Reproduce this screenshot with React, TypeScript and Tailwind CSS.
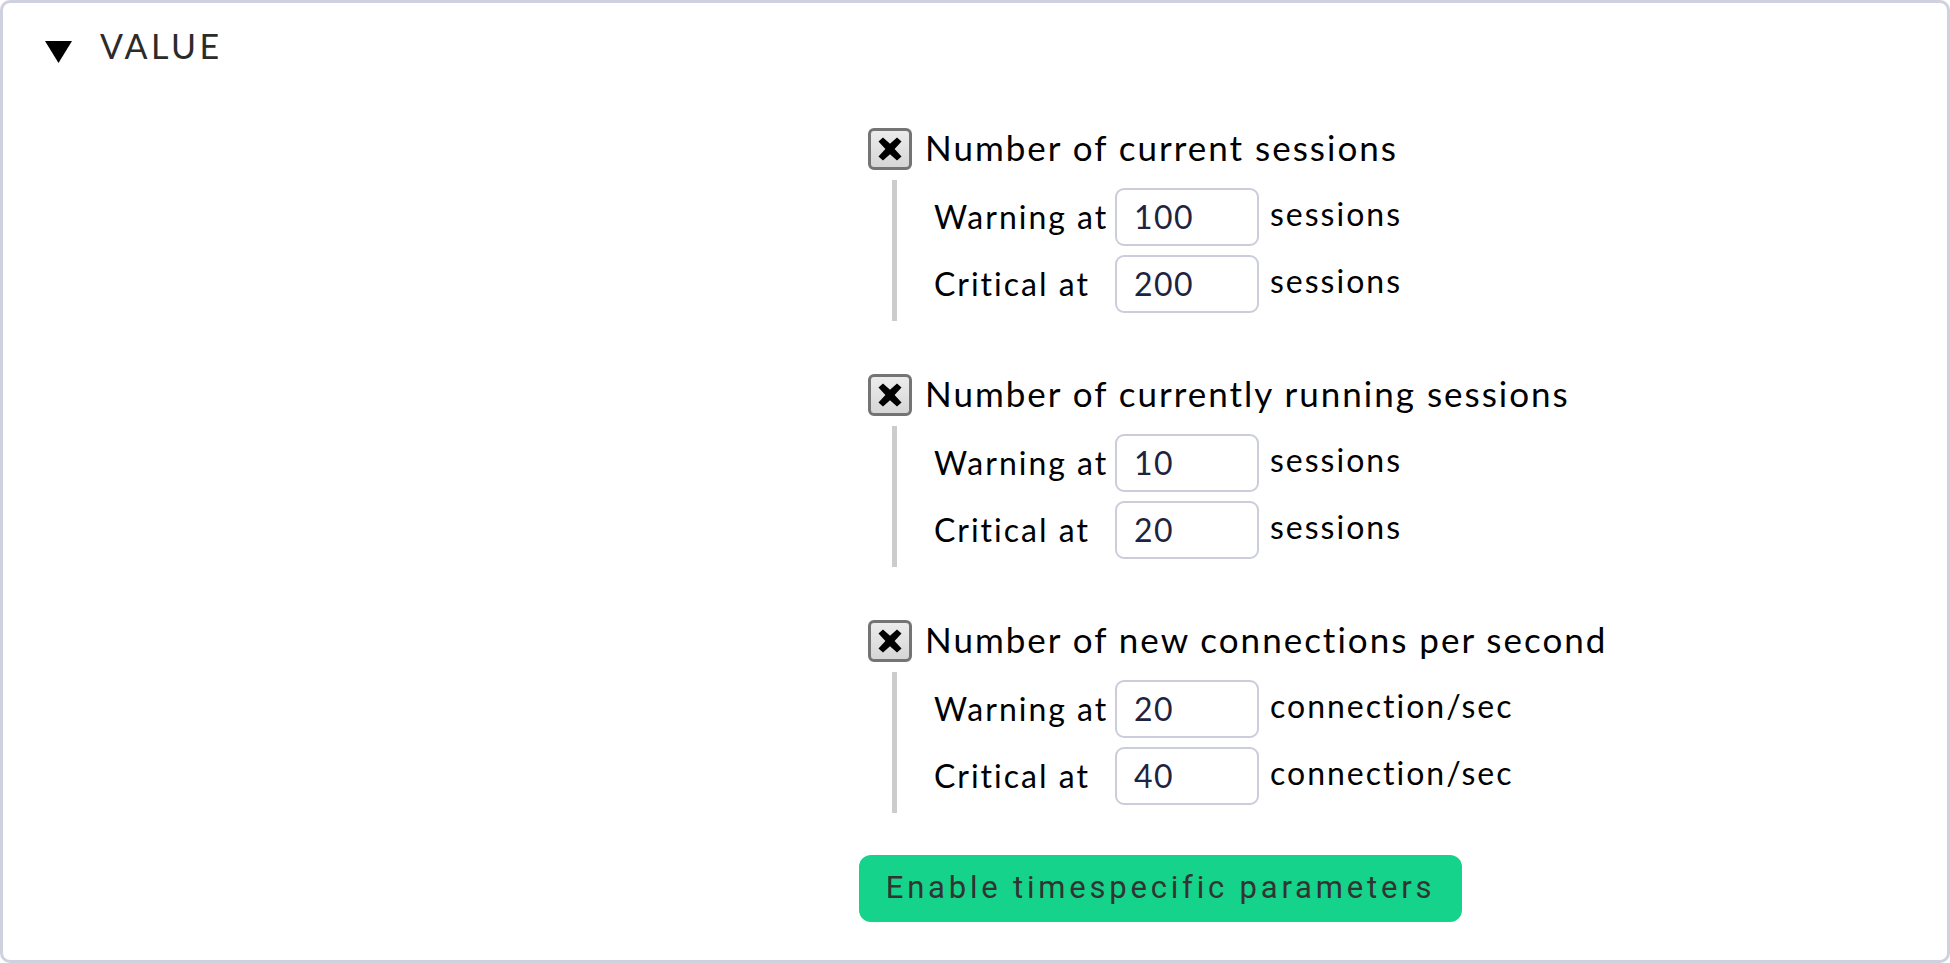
import React from "react";

type Threshold = { label: string; value: string; unit: string };
type Section = { title: string; rows: Threshold[] };

const SECTIONS: Section[] = [
  {
    title: "Number of current sessions",
    rows: [
      { label: "Warning at", value: "100", unit: "sessions" },
      { label: "Critical at", value: "200", unit: "sessions" },
    ],
  },
  {
    title: "Number of currently running sessions",
    rows: [
      { label: "Warning at", value: "10", unit: "sessions" },
      { label: "Critical at", value: "20", unit: "sessions" },
    ],
  },
  {
    title: "Number of new connections per second",
    rows: [
      { label: "Warning at", value: "20", unit: "connection/sec" },
      { label: "Critical at", value: "40", unit: "connection/sec" },
    ],
  },
];

function CheckedBox() {
  return (
    <span className="flex h-[42px] w-[44px] shrink-0 items-center justify-center rounded-[6px] border-[3px] border-[#747474] bg-gradient-to-b from-[#ececec] to-[#d6d6d6]">
      <svg width="26" height="24" viewBox="0 0 26 24" aria-hidden="true">
        <path
          d="M1.5 4.5 L6 0.5 L13 6.8 L20 0.5 L24.5 4.5 L17.6 12 L24.5 19.5 L20 23.5 L13 17.2 L6 23.5 L1.5 19.5 L8.4 12 Z"
          fill="#000"
        />
      </svg>
    </span>
  );
}

function ThresholdRow({ row }: { row: Threshold }) {
  return (
    <div className="flex h-[58px] items-center">
      <span className="w-[181px] shrink-0 text-[32px] tracking-[2px] text-black">{row.label}</span>
      <span className="flex h-[58px] w-[144px] shrink-0 items-center rounded-[9px] border-2 border-[#cbcdda] bg-white pl-[17px] text-[32px] tracking-[1.5px] text-[#1e2440]">
        {row.value}
      </span>
      <span className="ml-[11px] -mt-[6px] text-[32px] tracking-[2px] text-black">{row.unit}</span>
    </div>
  );
}

function SectionBlock({ section, first }: { section: Section; first: boolean }) {
  return (
    <div className={first ? "" : "mt-[53px]"}>
      <div className="flex h-[42px] items-center gap-[13px]">
        <CheckedBox />
        <span className="pb-[3px] text-[35px] tracking-[2px] text-black">{section.title}</span>
      </div>
      <div className="mt-[10px] ml-[24px] flex flex-col gap-[9px] border-l-[5px] border-[#cccccc] py-[8px] pl-[37px]">
        {section.rows.map((r) => (
          <ThresholdRow key={r.label} row={r} />
        ))}
      </div>
    </div>
  );
}

export default function App() {
  return (
    <div className="h-[963px] w-full bg-white font-['Lato','Noto_Sans',sans-serif]">
      <div className="h-full rounded-[10px] border-[3px] border-[#cfd1de] bg-white">
        <div className="mt-[23px] flex h-[40px] items-center pl-[42px]">
          <svg width="27" height="22" viewBox="0 0 27 22" className="mt-[12px]" aria-hidden="true">
            <polygon points="0,0 27,0 13.5,22" fill="#000" />
          </svg>
          <span className="ml-[28px] text-[34px] leading-[40px] tracking-[0.1em] text-[#2b2b2b]">VALUE</span>
        </div>

        <div className="flex">
          <div className="w-[865px] shrink-0" />
          <div className="flex flex-col pt-[62px]">
            {SECTIONS.map((s, i) => (
              <SectionBlock key={s.title} section={s} first={i === 0} />
            ))}
            <button
              type="button"
              className="mt-[42px] -ml-[9px] flex h-[67px] w-[603px] items-center justify-center rounded-[12px] bg-[#15d38a] font-['Roboto',sans-serif] text-[31px] tracking-[3.8px] text-[#333333]"
            >
              Enable timespecific parameters
            </button>
          </div>
        </div>
      </div>
    </div>
  );
}
